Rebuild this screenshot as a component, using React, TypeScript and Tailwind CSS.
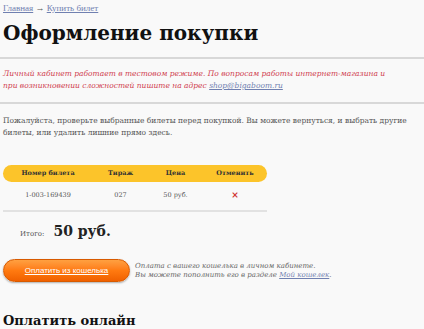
import React from "react";

export default function App() {
  const serif = { fontFamily: '"DejaVu Serif", serif' };
  return (
    <div className="w-[424px] h-[329px] overflow-hidden bg-[#f9f9f9] text-[#333]" style={serif}>
      <div className="px-[3px] pt-[2px]">
        <div className="text-[9px] leading-[12px] text-[#7080b0]" style={{ fontFamily: '"Liberation Serif", serif' }}>
          <a className="underline">Главная</a> <span className="text-[#555]">→</span> <a className="underline">Купить билет</a>
        </div>
        <h1 className="mt-[6px] text-[20px] leading-[26px] font-bold text-[#111]">Оформление покупки</h1>
      </div>
      <div className="mt-[11px] h-[2px] bg-[#d8d8d8]" />
      <div className="px-[3px] pt-[9px] text-[7.5px] leading-[12px] italic text-[#d0404f] pr-[30px]">
        Личный кабинет работает в тестовом режиме. По вопросам работы интернет-магазина и при возникновении сложностей пишите на адрес <a className="underline text-[#7080b0]">shop@bigaboom.ru</a>
      </div>
      <div className="mt-[10px] h-[2px] bg-[#d8d8d8]" />
      <div className="px-[3px] pt-[11px] text-[7.5px] leading-[12px] text-[#555] pr-[10px]">
        Пожалуйста, проверьте выбранные билеты перед покупкой. Вы можете вернуться, и выбрать другие билеты, или удалить лишние прямо здесь.
      </div>
      <div className="px-[3px] mt-[26px] w-[270px]">
        <div className="grid grid-cols-[90px_55px_55px_64px] items-center h-[17px] rounded-[9px] bg-[#fcc42a] text-[6.5px] font-bold text-[#333]">
          <div className="text-center">Номер билета</div>
          <div className="text-center">Тираж</div>
          <div className="text-center">Цена</div>
          <div className="text-center">Отменить</div>
        </div>
        <div className="grid grid-cols-[90px_55px_55px_64px] items-center h-[30px] text-[6.5px] text-[#555] border-b-[2px] border-[#e2e2e2]">
          <div className="text-center">1-003-169439</div>
          <div className="text-center">027</div>
          <div className="text-center">50 руб.</div>
          <div className="text-center text-[#d03030] font-bold text-[9px]">×</div>
        </div>
        <div className="flex items-baseline h-[38px] pl-[17px] pt-[9px]">
          <span className="text-[7px] text-[#555]">Итого:</span>
          <span className="ml-[9px] text-[14px] font-bold text-[#222]">50 руб.</span>
        </div>
      </div>
      <div className="px-[3px] mt-[9px] flex items-center">
        <div className="w-[127px] h-[23px] rounded-full bg-gradient-to-b from-[#ffa040] via-[#ff7a10] to-[#f06000] border border-[#d85a00] flex items-center justify-center shadow-[0_1px_2px_rgba(0,0,0,0.3)]">
          <span className="text-[8px] underline text-white" style={{ fontFamily: '"Liberation Sans", Arial, sans-serif' }}>Оплатить из кошелька</span>
        </div>
        <div className="ml-[5px] text-[7px] leading-[9px] italic text-[#666]">
          <div>Оплата с вашего кошелька в личном кабинете.</div>
          <div>Вы можете пополнить его в разделе <a className="underline text-[#7080b0]">Мой кошелек</a>.</div>
        </div>
      </div>
      <div className="px-[3px] mt-[29px] text-[13px] font-bold text-[#111]">Оплатить онлайн</div>
    </div>
  );
}
